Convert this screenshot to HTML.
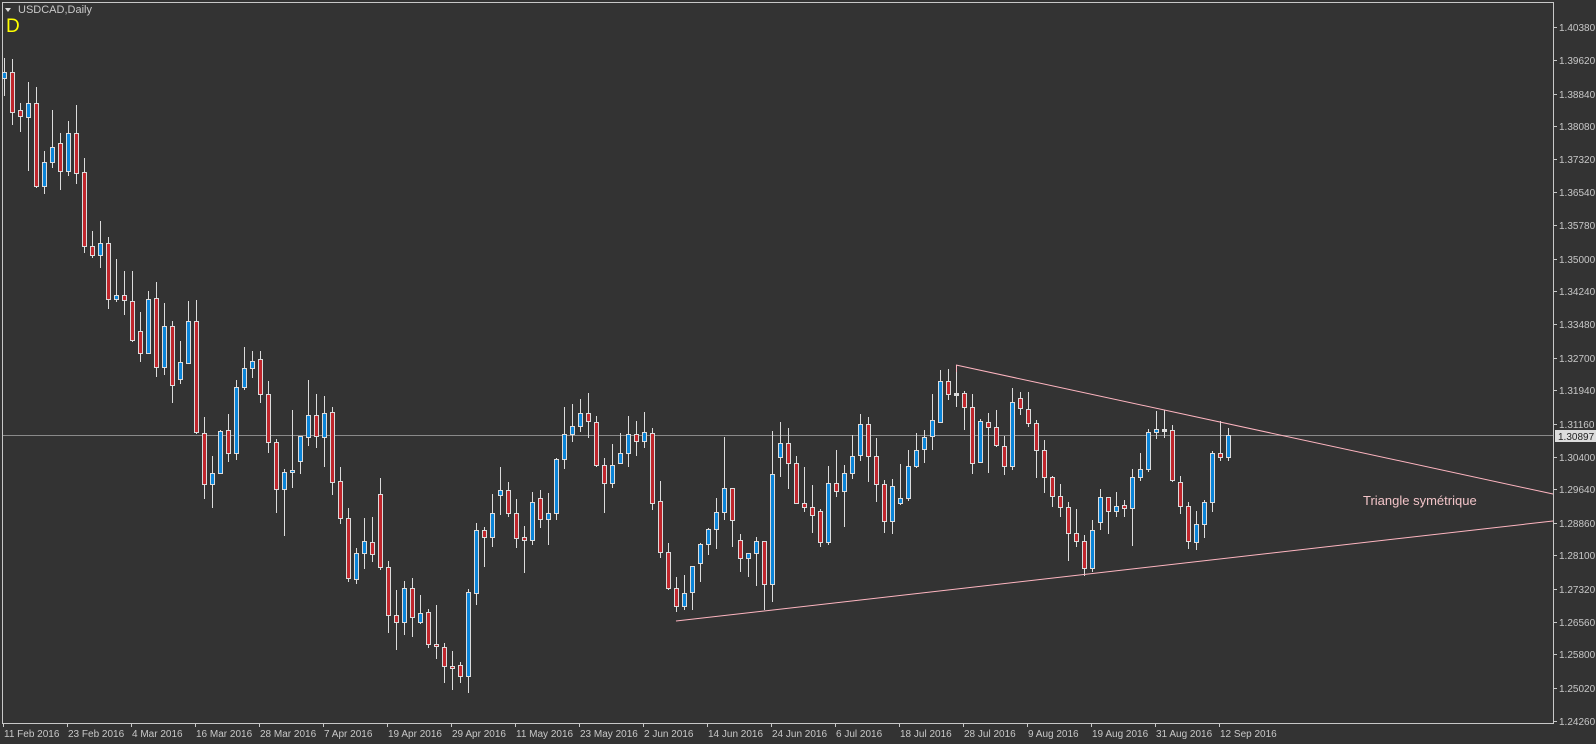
<!DOCTYPE html>
<html><head><meta charset="utf-8">
<style>
html,body{margin:0;padding:0;background:#333333;width:1596px;height:744px;overflow:hidden}
svg{display:block}
text{font-family:"Liberation Sans",sans-serif}
</style></head>
<body>
<svg id="s" width="1596" height="744" xmlns="http://www.w3.org/2000/svg">
<rect x="0" y="0" width="1596" height="744" fill="#333333"/>
<rect x="2.5" y="2.5" width="1551" height="721" fill="none" stroke="#c8c8c8" stroke-width="1"/>
<line x1="3" y1="435.5" x2="1553" y2="435.5" stroke="#8a8a8a" stroke-width="1"/>
<g id="c"></g>
<line x1="956" y1="365" x2="1553" y2="494" stroke="#ffb6c1" stroke-width="1"/>
<line x1="676" y1="621" x2="1553" y2="521" stroke="#ffb6c1" stroke-width="1"/>
<line x1="956.5" y1="365" x2="956.5" y2="372" stroke="#ffb6c1" stroke-width="1"/>
<text x="1363" y="505" font-size="13" fill="#f2c4c8">Triangle symétrique</text>
<path d="M5 8 L11 8 L8 12 Z" fill="#dcdcdc"/>
<text x="18" y="13" font-size="11" fill="#c8c8c8">USDCAD,Daily</text>
<text x="6" y="32" font-size="19" fill="#ffff00">D</text>
<g id="ax" font-size="10" fill="#c8c8c8"></g>
<rect x="1555" y="430" width="41" height="12" fill="#dcdcdc"/>
<text x="1558" y="440" font-size="10" fill="#222">1.30897</text>
</svg>
<script>
var d=[[78,72,58,96],[72,112,59,125],[110,116,103,132],[117,103,82,171],[103,186,87,188],[186,162,151,194],[162,147,110,168],[143,171,133,190],[171,133,121,176],[133,173,105,184],[172,246,158,253],[246,255,231,258],[255,243,221,268],[243,299,237,309],[299,295,259,302],[295,300,271,315],[301,340,271,342],[331,353,312,362],[353,299,291,354],[298,367,282,377],[367,326,303,375],[326,385,321,403],[379,362,341,384],[363,321,301,364],[321,432,300,434],[433,484,417,499],[484,473,456,508],[473,431,430,473],[430,453,414,462],[453,387,380,460],[387,368,347,390],[368,361,351,378],[359,394,351,403],[394,442,381,453],[442,489,439,513],[489,472,469,536],[472,470,410,488],[461,436,436,474],[437,415,380,446],[415,436,394,448],[437,413,396,467],[412,482,407,495],[481,518,467,524],[518,578,508,582],[579,553,548,584],[553,541,518,569],[542,554,517,562],[494,567,478,570],[567,615,561,633],[615,622,590,650],[622,588,581,635],[588,617,578,637],[622,613,595,624],[612,644,609,648],[644,646,605,659],[647,666,643,683],[666,668,651,690],[665,676,662,683],[676,592,589,693],[593,530,523,605],[530,537,527,567],[537,513,494,547],[495,490,467,515],[490,513,482,517],[513,538,499,548],[537,540,526,573],[540,502,492,545],[498,519,490,528],[519,513,493,545],[513,459,458,520],[459,434,407,469],[434,426,404,442],[426,413,399,432],[413,421,393,438],[422,465,416,467],[465,483,458,513],[483,465,444,488],[463,453,433,464],[453,434,416,467],[434,441,421,456],[441,432,412,448],[433,503,428,510],[501,552,481,558],[552,588,543,590],[588,606,577,612],[606,593,575,610],[592,566,566,610],[563,544,543,582],[544,529,528,555],[529,512,498,549],[512,488,437,520],[488,520,488,547],[540,558,534,572],[558,553,553,577],[553,541,537,586],[541,584,541,610],[584,474,431,602],[457,443,422,477],[443,463,428,489],[463,503,456,503],[503,507,467,512],[507,515,485,533],[511,542,509,547],[542,483,466,545],[483,491,450,497],[491,473,465,527],[473,456,435,479],[455,424,414,461],[424,456,417,482],[456,484,438,502],[484,521,480,533],[521,486,479,534],[503,498,464,505],[498,466,450,501],[466,450,433,468],[449,437,430,463],[436,420,394,450],[422,381,370,422],[381,394,369,400],[393,394,365,407],[393,407,391,430],[407,463,394,474],[462,421,419,463],[422,427,413,473],[427,445,410,447],[446,466,436,475],[466,402,388,470],[398,408,392,415],[409,423,392,427],[423,450,420,478],[450,477,440,493],[477,496,476,507],[496,507,484,517],[507,533,502,561],[533,541,509,547],[541,568,535,576],[568,530,520,572],[522,497,489,530],[497,511,497,534],[511,506,492,517],[505,508,500,517],[508,477,469,546],[477,469,453,481],[469,432,429,472],[432,429,411,439],[429,430,410,438],[430,480,425,482],[482,506,476,514],[506,541,502,549],[542,524,511,550],[524,502,500,538],[502,453,451,512],[453,457,421,461],[457,435,428,461]];
var h='';
for(var i=0;i<d.length;i++){var c=d[i],x=4+8*i,o=c[0],cl=c[1];var t=Math.min(o,cl),b=Math.max(o,cl);
h+='<line x1="'+(x+0.5)+'" y1="'+c[2]+'" x2="'+(x+0.5)+'" y2="'+c[3]+'" stroke="#dcdcdc" stroke-width="1"/>';
var f=(b-t<=1)?'#dcdcdc':(cl<o?'#0a84d8':'#c0262c');
if(b-t<2){b=t+2;}
h+='<rect x="'+(x-1.5)+'" y="'+(t+0.5)+'" width="4" height="'+(b-t)+'" fill="'+f+'" stroke="#dcdcdc" stroke-width="1"/>';}
document.getElementById('c').innerHTML=h;
var p=["1.40380","1.39620","1.38840","1.38080","1.37320","1.36540","1.35780","1.35000","1.34240","1.33480","1.32700","1.31940","1.31160","1.30400","1.29640","1.28860","1.28100","1.27320","1.26560","1.25800","1.25020","1.24260"];
var a='';
for(var j=0;j<p.length;j++){var y=27.3+(1.4038-parseFloat(p[j]))*4301;
a+='<line x1="1553" y1="'+(Math.round(y)+0.5)+'" x2="1557" y2="'+(Math.round(y)+0.5)+'" stroke="#c8c8c8"/>';
a+='<text x="1559" y="'+(Math.round(y)+4)+'">'+p[j]+'</text>';}
var ds=["11 Feb 2016","23 Feb 2016","4 Mar 2016","16 Mar 2016","28 Mar 2016","7 Apr 2016","19 Apr 2016","29 Apr 2016","11 May 2016","23 May 2016","2 Jun 2016","14 Jun 2016","24 Jun 2016","6 Jul 2016","18 Jul 2016","28 Jul 2016","9 Aug 2016","19 Aug 2016","31 Aug 2016","12 Sep 2016"];
for(var k=0;k<ds.length;k++){var x=3+64*k;
a+='<line x1="'+(x+0.5)+'" y1="723" x2="'+(x+0.5)+'" y2="727" stroke="#c8c8c8"/>';
a+='<text x="'+(x+1)+'" y="737">'+ds[k]+'</text>';}
document.getElementById('ax').innerHTML=a;
</script>
</body></html>
